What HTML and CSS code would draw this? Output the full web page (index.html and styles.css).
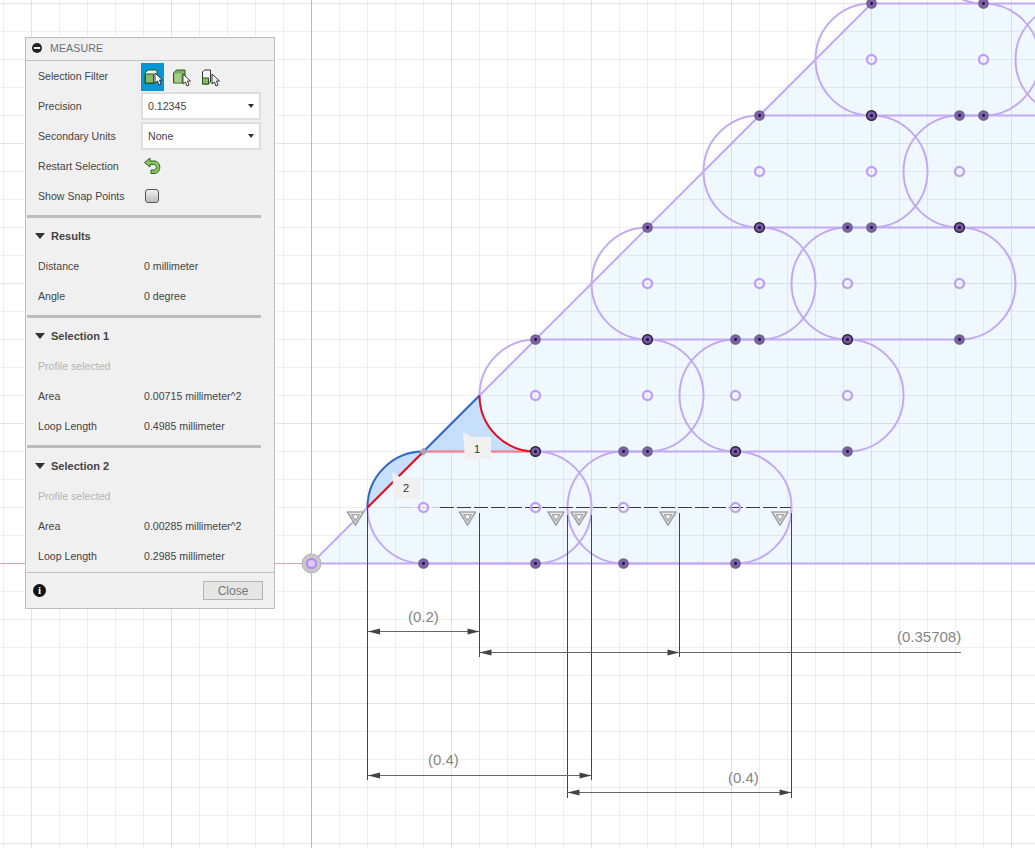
FILE: index.html
```html
<!DOCTYPE html>
<html lang="en">
<head>
<meta charset="utf-8">
<title>Measure</title>
<link rel="stylesheet" href="styles.css">
</head>
<body>
<main class="viewport">
<svg class="canvas" width="1035" height="848" viewBox="0 0 1035 848" xmlns="http://www.w3.org/2000/svg">
  <defs>
    <pattern id="minor" width="28" height="28" patternUnits="userSpaceOnUse" x="3" y="3">
      <path class="grid-minor" d="M0 .5H28M.5 0V28"/>
    </pattern>
    <pattern id="major" width="140" height="140" patternUnits="userSpaceOnUse" x="31" y="3">
      <path class="grid-major" d="M0 .5H140M.5 0V140"/>
    </pattern>
    <g id="node"><circle r="4.6" class="node-ring"/><circle r="1.4" class="node-dot"/></g>
    <g id="node-dark"><circle r="4.8" class="node-ring-dark"/><circle r="1.5" class="node-dot"/></g>
    <circle id="open" r="4.6" class="open"/>
    <g id="tri">
      <path class="tri-outer" d="M-8 -5H8L0 8Z"/>
      <path class="tri-inner" d="M-3.800 -2.300H3.800L0 3.800Z"/>
    </g>
    <path id="stadium" d="M0 -56H112A56 56 0 0 1 112 56H0A56 56 0 0 1 0 -56Z"/>
    <g id="arrow-l"><path class="arrowhead" d="M0 0L12 -3V3Z"/></g>
    <g id="arrow-r"><path class="arrowhead" d="M0 0L-12 -3V3Z"/></g>
  </defs>

  <rect class="paper" width="1035" height="848"/>
  <path class="region" d="M311.5 563.5L871.5 3.5H1035V563.5Z"/>
  <rect width="1035" height="848" fill="url(#minor)"/>
  <rect width="1035" height="848" fill="url(#major)"/>
  <path class="axis-green" d="M311.5 0V848"/>
  <path class="axis-red" d="M0 563.5H311"/>

  <path class="sel-fill" d="M479.5 395.5A56 56 0 0 0 535.5 451.5H423.5Z"/>
  <path class="sel-fill" d="M367.5 507.5A56 56 0 0 1 423.5 451.5Z"/>

  <g class="sketch">
    <use href="#stadium" x="423.5" y="507.5"/>
    <use href="#stadium" x="623.5" y="507.5"/>
    <use href="#stadium" x="535.5" y="395.5"/>
    <use href="#stadium" x="735.5" y="395.5"/>
    <use href="#stadium" x="647.5" y="283.5"/>
    <use href="#stadium" x="847.5" y="283.5"/>
    <use href="#stadium" x="759.5" y="171.5"/>
    <use href="#stadium" x="959.5" y="171.5"/>
    <use href="#stadium" x="871.5" y="59.5"/>
    <use href="#stadium" x="1071.5" y="59.5"/>
    <use href="#stadium" x="983.5" y="-52.5"/>
    <path d="M311.5 563.5L871.5 3.5"/>
    <path d="M311.5 563.5H1035"/>
  </g>

  <path class="dash-fade" d="M398 507.5H440"/>
  <path class="dash" d="M440 507.5H791"/>

  <path class="sel-red-soft" d="M423.5 451.500H535.5"/>
  <path class="sel-blue" d="M423.5 451.5L479.5 395.5"/>
  <path class="sel-blue" d="M367.5 507.5A56 56 0 0 1 423.5 451.5"/>
  <path class="sel-red" d="M479.5 395.5A56 56 0 0 0 535.5 451.5"/>
  <path class="sel-red" d="M367.5 507.5L423.5 451.5"/>
  <path class="snap" d="M423.5 447.5L427.5 451.5L423.5 455.5L419.5 451.5Z"/>

  <g>
    <use href="#open" x="423.5" y="507.5"/><use href="#open" x="535.5" y="507.5"/><use href="#open" x="623.5" y="507.5"/><use href="#open" x="735.5" y="507.5"/>
    <use href="#open" x="535.5" y="395.5"/><use href="#open" x="647.5" y="395.5"/><use href="#open" x="735.5" y="395.5"/><use href="#open" x="847.5" y="395.5"/>
    <use href="#open" x="647.5" y="283.5"/><use href="#open" x="759.5" y="283.5"/><use href="#open" x="847.5" y="283.5"/><use href="#open" x="959.5" y="283.5"/>
    <use href="#open" x="759.5" y="171.5"/><use href="#open" x="871.5" y="171.5"/><use href="#open" x="959.5" y="171.5"/>
    <use href="#open" x="871.5" y="59.5"/><use href="#open" x="983.5" y="59.5"/>
  </g>
  <g>
    <use href="#node" x="423.5" y="563.5"/><use href="#node" x="535.5" y="563.5"/><use href="#node" x="623.5" y="563.5"/><use href="#node" x="735.5" y="563.5"/>
    <use href="#node-dark" x="535.5" y="451.5"/><use href="#node" x="623.5" y="451.5"/><use href="#node" x="647.5" y="451.5"/><use href="#node-dark" x="735.5" y="451.5"/><use href="#node" x="847.5" y="451.5"/>
    <use href="#node" x="535.5" y="339.5"/><use href="#node-dark" x="647.5" y="339.5"/><use href="#node" x="735.5" y="339.5"/><use href="#node" x="759.5" y="339.5"/><use href="#node-dark" x="847.5" y="339.5"/><use href="#node" x="959.5" y="339.5"/>
    <use href="#node" x="647.5" y="227.5"/><use href="#node-dark" x="759.5" y="227.5"/><use href="#node" x="847.5" y="227.5"/><use href="#node" x="871.5" y="227.5"/><use href="#node-dark" x="959.5" y="227.5"/>
    <use href="#node" x="759.5" y="115.5"/><use href="#node-dark" x="871.5" y="115.5"/><use href="#node" x="959.5" y="115.5"/><use href="#node" x="983.5" y="115.5"/>
    <use href="#node" x="871.5" y="3.5"/><use href="#node" x="983.5" y="3.5"/>
  </g>

  <circle class="origin-halo" cx="311.5" cy="563.5" r="9.5"/>
  <circle class="origin-ring" cx="311.5" cy="563.5" r="4.6"/>

  <g>
    <use href="#tri" x="355.5" y="517"/>
    <use href="#tri" x="467.5" y="517"/>
    <use href="#tri" x="556" y="517"/>
    <use href="#tri" x="579" y="517"/>
    <use href="#tri" x="668" y="517"/>
    <use href="#tri" x="780" y="517"/>
  </g>

  <path class="dim" d="M367.5 507V780M479.5 513V657M567.5 515V798M591.5 515V780M679.5 513V657M791.5 513V798"/>
  <path class="dim-h" d="M368 631.5H479M479 652.5H961M368 775.5H591M567 792.5H791"/>
  <use href="#arrow-l" x="368" y="631.5"/><use href="#arrow-r" x="479.5" y="631.5"/>
  <use href="#arrow-l" x="479.5" y="652.5"/><use href="#arrow-r" x="679.5" y="652.5"/>
  <use href="#arrow-l" x="368" y="775.5"/><use href="#arrow-r" x="591.5" y="775.5"/>
  <use href="#arrow-l" x="567.5" y="792.5"/><use href="#arrow-r" x="791.5" y="792.5"/>
  <text class="dim-text" x="408" y="622">(0.2)</text>
  <text class="dim-text" x="897" y="642">(0.35708)</text>
  <text class="dim-text" x="428" y="765">(0.4)</text>
  <text class="dim-text" x="728" y="783">(0.4)</text>

  <path class="tag" d="M463 432L472 437H491V459H465Z"/>
  <text class="tag-text" x="477" y="453" text-anchor="middle">1</text>
  <path class="tag" d="M392 472L400 477H420V499H394Z"/>
  <text class="tag-text" x="406" y="492" text-anchor="middle">2</text>
</svg>

<aside class="panel">
  <header class="panel-head">
    <svg class="head-icon" width="12" height="12" viewBox="0 0 12 12"><circle cx="6" cy="6" r="5" fill="#222"/><rect x="2.8" y="5" width="6.4" height="2" fill="#eee"/></svg>
    <span class="panel-title">MEASURE</span>
  </header>

  <div class="row">
    <span class="label">Selection Filter</span>
    <div class="filters">
      <button class="filter filter-on" type="button">
        <svg width="22" height="20" viewBox="0 0 22 20"><path d="M3 6L6 3H15V13L12 16.500H3Z" fill="#f2f2f2" stroke="#1f5a1f"/><path d="M3.500 7H11.500V16H3.500Z" fill="#8db86a" stroke="#1f5a1f"/><path d="M13 6L13 16L15.500 14L17 18L19 17L17.500 13H20.500Z" fill="#fff" stroke="#222" stroke-width=".9"/></svg>
      </button>
      <span class="filter">
        <svg width="22" height="20" viewBox="0 0 22 20"><path d="M2.500 6L5.500 3H14V13L11 16H2.500Z" fill="#7fae5c" stroke="#1f5a1f"/><path d="M3.500 6.500H10V15.500H3.500Z" fill="#a6cc88"/><path d="M12 7L12 17L14.500 15L16 19L18 18L16.500 14H19.500Z" fill="#fff" stroke="#222" stroke-width=".9"/></svg>
      </span>
      <span class="filter">
        <svg width="22" height="20" viewBox="0 0 22 20"><path d="M2.500 5L4.500 3H10.500V15L8.500 17H2.500Z" fill="#f2f2f2" stroke="#333"/><path d="M2.500 11H8.500V17H2.500Z" fill="#8db86a" stroke="#1f5a1f"/><path d="M12 7L12 17L14.500 15L16 19L18 18L16.500 14H19.500Z" fill="#f4f4f4" stroke="#222" stroke-width=".9"/></svg>
      </span>
    </div>
  </div>
  <div class="row">
    <span class="label">Precision</span>
    <div class="select"><span>0.12345</span><i class="caret"></i></div>
  </div>
  <div class="row">
    <span class="label">Secondary Units</span>
    <div class="select"><span>None</span><i class="caret"></i></div>
  </div>
  <div class="row">
    <span class="label">Restart Selection</span>
    <svg class="undo" width="18" height="18" viewBox="0 0 18 18"><path d="M7 1L1.500 5.500L7 10V7.500H10.500C12.300 7.500 13.300 8.700 13.300 10.300C13.300 11.900 12.300 13 10.500 13H8V16.500H11C14.500 16.500 16.800 14 16.800 10.300C16.800 6.600 14.500 4 11 4H7Z" fill="#8dbf5d" stroke="#1f6a1f" stroke-width="1"/></svg>
  </div>
  <div class="row">
    <span class="label">Show Snap Points</span>
    <span class="check"></span>
  </div>
  <div class="sep"></div>

  <div class="row section"><i class="down"></i><span>Results</span></div>
  <div class="row"><span class="label">Distance</span><span class="value">0 millimeter</span></div>
  <div class="row"><span class="label">Angle</span><span class="value">0 degree</span></div>
  <div class="sep"></div>

  <div class="row section"><i class="down"></i><span>Selection 1</span></div>
  <div class="row"><span class="label muted">Profile selected</span></div>
  <div class="row"><span class="label">Area</span><span class="value">0.00715 millimeter^2</span></div>
  <div class="row"><span class="label">Loop Length</span><span class="value">0.4985 millimeter</span></div>
  <div class="sep"></div>

  <div class="row section"><i class="down"></i><span>Selection 2</span></div>
  <div class="row"><span class="label muted">Profile selected</span></div>
  <div class="row"><span class="label">Area</span><span class="value">0.00285 millimeter^2</span></div>
  <div class="row"><span class="label">Loop Length</span><span class="value">0.2985 millimeter</span></div>

  <footer class="panel-foot">
    <span class="info">i</span>
    <button class="close" type="button">Close</button>
  </footer>
</aside>
</main>
</body>
</html>
```

FILE: styles.css
```css
* { box-sizing: border-box; }
html, body { margin: 0; padding: 0; background: #fff; }
body { font-family: "Liberation Sans", Arial, sans-serif; overflow: hidden; }
.viewport { position: relative; width: 1035px; height: 848px; overflow: hidden; }
.canvas { display: block; }

.paper { fill: #fff; }
.region { fill: #eff8ff; }
.grid-minor { fill: none; stroke: rgba(120, 130, 130, .13); stroke-width: 1; }
.grid-major { fill: none; stroke: rgba(110, 120, 120, .09); stroke-width: 1; }
.axis-green { stroke: #8fdc7e; stroke-width: 1; fill: none; }
.axis-red { stroke: #d9a7a7; stroke-width: 1; fill: none; }
.sel-fill { fill: #c6dffb; }
.sketch { fill: none; stroke: #c4a9f2; stroke-width: 2; }
.dash { stroke: #3a3a3a; stroke-width: 1.2; stroke-dasharray: 14 3; fill: none; }
.dash-fade { stroke: #ccc; stroke-width: 1; stroke-dasharray: 14 3; fill: none; }
.sel-red-soft { stroke: #ff7f86; stroke-width: 2; fill: none; }
.sel-blue { stroke: #2e6cc4; stroke-width: 2; fill: none; }
.sel-red { stroke: #f6000c; stroke-width: 1.8; fill: none; }
.snap { fill: #a9a3b5; }
.open { fill: none; stroke: #c2a0ee; stroke-width: 2.2; }
.node-ring { fill: #7f5fb0; stroke: #66617a; stroke-width: 1.4; }
.node-ring-dark { fill: #7a58ad; stroke: #2a2835; stroke-width: 1.6; }
.node-dot { fill: #15101f; }
.origin-halo { fill: #c8c8c8; stroke: #b4b4b4; stroke-width: 1; }
.origin-ring { fill: #dcc8f5; stroke: #b388ee; stroke-width: 2; }
.tri-outer { fill: #ececec; stroke: #a6a6a6; stroke-width: 1.7; stroke-linejoin: round; }
.tri-inner { fill: #f6f8f9; stroke: #a6a6a6; stroke-width: 1.3; stroke-linejoin: round; }
.dim { stroke: #444; stroke-width: 1; fill: none; }
.dim-h { stroke: #666; stroke-width: 1.2; fill: none; }
.arrowhead { fill: #444; }
.dim-text { font: 15px "Liberation Sans", Arial, sans-serif; fill: #858585; }
.tag { fill: #f0f0f0; }
.tag-text { font: 11px "Liberation Sans", Arial, sans-serif; fill: #333; }

.panel {
  position: absolute;
  left: 25px;
  top: 37px;
  width: 250px;
  height: 572px;
  background: #f0f0f0;
  border: 1px solid #bdbdbd;
  font-size: 10.6px;
  color: #444;
  display: flex;
  flex-direction: column;
}
.panel-head {
  height: 23px;
  flex: none;
  display: flex;
  align-items: center;
  padding: 0 0 2px 5px;
  gap: 7px;
  border-bottom: 1px solid #c4c4c4;
}
.head-icon { flex: none; }
.panel-title { font-size: 10.6px; color: #6f6f78; letter-spacing: .1px; }
.row {
  height: 30px;
  flex: none;
  display: flex;
  align-items: center;
  padding-left: 12px;
}
.label { width: 103px; flex: none; }
.muted { color: #b4b4b4; }
.value { margin-left: 3px; white-space: nowrap; }
.filters { display: flex; margin-top: 1px; }
.filter {
  width: 23px;
  height: 28px;
  margin-right: 6px;
  padding: 0;
  border: 0;
  background: transparent;
  display: flex;
  align-items: center;
  justify-content: center;
}
.filter-on { background: #0696d7; }
.select {
  width: 120px;
  height: 28px;
  background: #fff;
  border: 2px solid #dedede;
  display: flex;
  align-items: center;
  justify-content: space-between;
  padding: 0 5px 0 5px;
  font-size: 10.6px;
}
.caret { width: 0; height: 0; border-left: 3.5px solid transparent; border-right: 3.5px solid transparent; border-top: 4px solid #333; }
.undo { margin-left: 2px; }
.check {
  width: 14px;
  height: 14px;
  margin-left: 4px;
  border: 1px solid #555;
  border-radius: 3px;
  background: linear-gradient(#f2f2f2, #bcbcbc);
}
.sep { height: 10px; flex: none; padding-top: 4px; padding-left: 1px; padding-right: 13px; }
.sep::before { content: ""; display: block; height: 2.5px; background: #bcbcbc; }
.section { font-size: 11px; font-weight: bold; color: #444; padding-left: 9px; gap: 6px; }
.down { width: 0; height: 0; border-left: 5px solid transparent; border-right: 5px solid transparent; border-top: 6px solid #333; }
.panel-foot {
  margin-top: auto;
  height: 36px;
  flex: none;
  border-top: 1px solid #c4c4c4;
  display: flex;
  align-items: center;
  justify-content: space-between;
  padding: 0 11px 0 7px;
}
.info {
  width: 13px;
  height: 13px;
  border-radius: 50%;
  background: #111;
  color: #fff;
  font: bold 11px/13px "Liberation Serif", serif;
  text-align: center;
}
.close {
  width: 60px;
  height: 19px;
  padding: 0;
  background: #e6e6e6;
  border: 1px solid #b5b5b5;
  color: #777;
  font: 12px "Liberation Sans", Arial, sans-serif;
}
```
